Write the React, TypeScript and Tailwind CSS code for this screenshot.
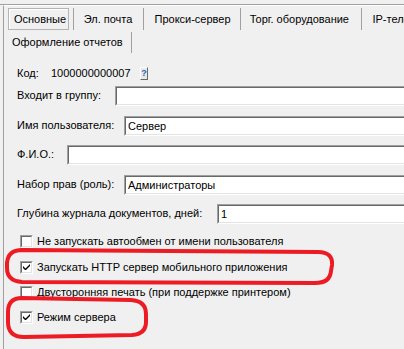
import React from "react";

const font = { fontFamily: '"Liberation Sans", Arial, sans-serif' };

function Field({ label, labelW, value, gapTop }: { label: string; labelW: string; value?: string; gapTop: string }) {
  return (
    <div className={`flex items-center ${gapTop}`}>
      <div className={`${labelW} shrink-0 -mt-[2px] whitespace-nowrap`}>{label}</div>
      <div className="flex-1 h-[20px] border border-t-[#a0a0a0] border-l-[#a0a0a0] border-b-white border-r-white">
        <div className="h-full border border-t-[#696969] border-l-[#696969] border-b-[#e3e3e3] border-r-[#e3e3e3] bg-white flex items-center pl-[2px] leading-none">
          {value}
        </div>
      </div>
    </div>
  );
}

function Check({ checked, label, mt }: { checked?: boolean; label: string; mt: string }) {
  return (
    <div className={`flex items-center h-[13px] ${mt}`}>
      <div className="w-[13px] h-[13px] shrink-0 border border-t-[#a0a0a0] border-l-[#a0a0a0] border-b-white border-r-white">
        <div className="w-full h-full border border-t-[#696969] border-l-[#696969] border-b-[#e3e3e3] border-r-[#e3e3e3] bg-white flex items-center justify-center">
          {checked && (
            <svg width="7" height="7" viewBox="0 0 7 7">
              <path d="M0 2 L0 4 L2 6 L3 6 L7 2 L7 0 L2.5 4.5 Z" fill="#000" />
            </svg>
          )}
        </div>
      </div>
      <div className="ml-[4px] -mt-[1px] whitespace-nowrap leading-none">{label}</div>
    </div>
  );
}

export default function App() {
  return (
    <div className="relative w-[404px] h-[349px] overflow-hidden bg-[#f0f0f0] text-black text-[11px]" style={font}>
      <div className="h-[4px]" />
      <div className="flex h-[345px] border-t border-t-[#a0a0a0]">
        <div className="w-[3px] shrink-0" />
        <div className="w-[440px] shrink-0 border-l border-l-[#a0a0a0] border-t border-t-white">
          {/* tabs row 1 */}
          <div className="flex h-[22px] mt-[2px] items-stretch whitespace-nowrap">
            <div className="w-[4px]" />
            <div className="w-[62px] border border-[#b4b4b4] shadow-[inset_1px_1px_0_#ffffff] flex items-center pl-[5px]">Основные</div>
            <div className="w-[5px] border-r border-r-[#a0a0a0]" />
            <div className="w-[72px] border-r border-r-[#a0a0a0] flex items-center pl-[10px]">Эл. почта</div>
            <div className="w-[98px] border-r border-r-[#a0a0a0] flex items-center pl-[10px]">Прокси-сервер</div>
            <div className="w-[124px] border-r border-r-[#a0a0a0] flex items-center pl-[9px]">Торг. оборудование</div>
            <div className="flex items-center pl-[10px]">IP-телефония</div>
          </div>
          {/* tabs row 2 */}
          <div className="flex h-[21px] mt-[2px] items-stretch whitespace-nowrap">
            <div className="w-[128px] border-r border-r-[#a0a0a0] flex items-center pl-[8px]">Оформление отчетов</div>
          </div>
          {/* content */}
          <div className="pl-[13px] pr-0">
            <div className="flex items-center mt-[13px] h-[14px]">
              <div className="w-[34px]">Код:</div>
              <div className="w-[89px]">1000000000007</div>
              <div className="w-[8px] h-[13px] border-t border-l border-t-white border-l-white border-r border-b border-r-[#696969] border-b-[#696969] bg-[#e8e8e8] flex items-center justify-center text-[9px] font-bold text-[#3060c0] leading-none">
                ?
              </div>
            </div>
            <Field label="Входит в группу:" labelW="w-[98px]" gapTop="mt-[6px]" />
            <Field label="Имя пользователя:" labelW="w-[107px]" value="Сервер" gapTop="mt-[10px]" />
            <Field label="Ф.И.О.:" labelW="w-[50px]" gapTop="mt-[9px]" />
            <Field label="Набор прав (роль):" labelW="w-[107px]" value="Администраторы" gapTop="mt-[10px]" />
            <Field label="Глубина журнала документов, дней:" labelW="w-[200px]" value="1" gapTop="mt-[9px]" />
            <div className="pl-[3px]">
              <Check label="Не запускать автообмен от имени пользователя" mt="mt-[11px]" />
              <Check checked label="Запускать HTTP сервер мобильного приложения" mt="mt-[13px]" />
              <Check label="Двусторонняя печать (при поддержке принтером)" mt="mt-[12px]" />
              <Check checked label="Режим сервера" mt="mt-[12px]" />
            </div>
          </div>
        </div>
      </div>
      <svg className="absolute left-0 top-0 pointer-events-none" width="404" height="349" viewBox="0 0 404 349">
        <path
          d="M 22 250 L 318 252 Q 333 252 332 265 L 331 271 Q 330 283 315 283 L 22 282 Q 7 281 7 268 L 7 263 Q 8 250 22 250 Z"
          fill="none"
          stroke="#ed1c24"
          strokeWidth="4"
        />
        <path
          d="M 22 298 L 131 300 Q 146 301 146 314 L 146 322 Q 146 334 132 335 L 24 337 Q 8 337 8 322 L 8 312 Q 8 298 22 298 Z"
          fill="none"
          stroke="#ed1c24"
          strokeWidth="4"
        />
      </svg>
    </div>
  );
}
